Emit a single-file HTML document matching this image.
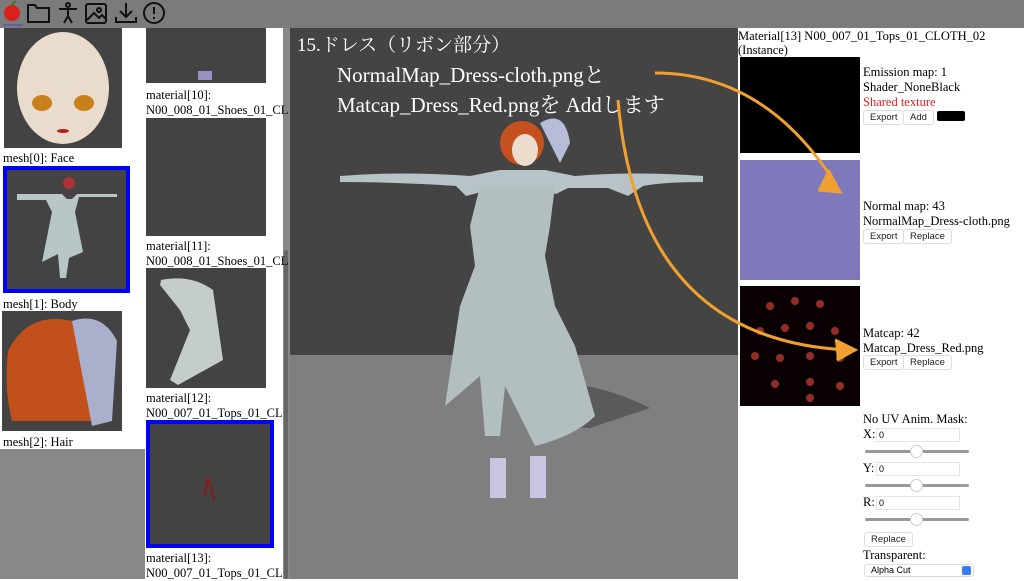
<!DOCTYPE html>
<html><head><meta charset="utf-8"><style>
*{margin:0;padding:0;box-sizing:border-box}
body{width:1024px;height:579px;overflow:hidden;position:relative;background:#fff;font-family:"Liberation Serif",serif;font-size:12.5px;color:#000}
.a{position:absolute}
.t{position:absolute;white-space:nowrap;line-height:15px}
.th{position:absolute;background:#434343}
.bl{border:4px solid #0000ff}
.btn{position:absolute;font-family:"Liberation Sans",sans-serif;font-size:9.5px;border:1px solid #ddd;border-radius:3px;background:#fff;padding:1px 6px;line-height:11px;color:#222}
.inp{position:absolute;width:84px;height:14px;border:1px solid #e4e4e4;font-family:"Liberation Sans",sans-serif;font-size:9px;padding-left:2px;line-height:12px}
.sl{position:absolute;width:104px;height:3px;background:#999;border-radius:2px}
.sl i{position:absolute;left:45px;top:-5px;width:13px;height:13px;border-radius:50%;background:#fff;border:1px solid #ccc}
.ov{position:absolute;white-space:nowrap;color:#fff;font-size:21px;line-height:22px;font-family:'Liberation Serif','Noto Serif CJK SC',serif}
</style></head><body>
<div class="a" style="left:0;top:0;width:1024px;height:28px;background:#7b7b7b"></div>
<svg class="a" style="left:0;top:0" width="170" height="28" fill="none" stroke="#111" stroke-width="2">
<circle cx="12" cy="13" r="8" fill="#d8201c" stroke="none"/><path d="M12 5 q1 -3 4 -3" stroke="#3a7a1a"/>
<line x1="3" y1="25" x2="23" y2="25" stroke="#6a5aa0"/>
<path d="M28 5h7l2 3h12v14h-21z"/>
<circle cx="68" cy="5" r="2"/><path d="M59 9h18M68 9v7l-4 7M68 16l4 7"/>
<rect x="86" y="4" width="20" height="19" rx="2"/><circle cx="99" cy="10" r="2"/><path d="M87 20l7-7 5 5 3-3 4 4"/>
<path d="M126 3v13M120 11l6 6 6-6M116 17v5h20v-5"/>
<circle cx="154" cy="13" r="10"/><path d="M154 7v7M154 17v2"/>
</svg>
<div class="a" style="left:0;top:449px;width:145px;height:130px;background:#888"></div>
<div class="a" style="left:283px;top:28px;width:7px;height:551px;background:#888"></div>
<div class="a" style="left:284px;top:250px;width:4px;height:329px;background:#666;border-radius:2px"></div>
<div class="th" style="left:4px;top:28px;width:118px;height:120px">
<svg width="118" height="120"><ellipse cx="59" cy="60" rx="46" ry="56" fill="#e9dccd"/><ellipse cx="38" cy="75" rx="10" ry="8" fill="#c8801c"/><ellipse cx="80" cy="75" rx="10" ry="8" fill="#c8801c"/><ellipse cx="59" cy="103" rx="6" ry="2" fill="#b52020"/></svg></div>
<div class="t" style="left:3px;top:151px">mesh[0]: Face</div>
<div class="th bl" style="left:3px;top:166px;width:127px;height:127px">
<svg width="119" height="119"><path d="M10 24h45l5 5h5l5-5h40v3H72l-4 15 8 40-14 6-3 20h-6l-2-24-16 8 10-50-6-12H10z" fill="#b9c6c8"/><circle cx="62" cy="13" r="6" fill="#a33"/></svg></div>
<div class="t" style="left:3px;top:297px">mesh[1]: Body</div>
<div class="th" style="left:2px;top:311px;width:120px;height:120px">
<svg width="120" height="120"><path d="M6 40q20-40 64-30q18 30 20 100H10q-8-30-4-70z" fill="#c2501a"/><path d="M70 10q30-10 45 20l-5 80-20 5z" fill="#aab0cc"/></svg></div>
<div class="t" style="left:3px;top:435px">mesh[2]: Hair</div>
<div class="th" style="left:146px;top:28px;width:120px;height:55px"><div class="a" style="left:52px;top:43px;width:14px;height:9px;background:#9890c0"></div></div>
<div class="t" style="left:146px;top:88px">material[10]:<br>N00_008_01_Shoes_01_CL</div>
<div class="th" style="left:146px;top:118px;width:120px;height:118px"></div>
<div class="t" style="left:146px;top:239px">material[11]:<br>N00_008_01_Shoes_01_CL</div>
<div class="th" style="left:146px;top:268px;width:120px;height:120px">
<svg width="120" height="120"><path d="M15 12q30-6 52 10l10 70-45 25-8-5 20-50-10-20-20-25z" fill="#c4cccc"/></svg></div>
<div class="t" style="left:146px;top:391px">material[12]:<br>N00_007_01_Tops_01_CL</div>
<div class="th bl" style="left:146px;top:420px;width:128px;height:128px"><svg width="120" height="120"><path d="M58 54l-4 18M58 54l6 22" stroke="#8a1a1a" stroke-width="2"/></svg></div>
<div class="t" style="left:146px;top:551px">material[13]:<br>N00_007_01_Tops_01_CL</div>
<div class="a" style="left:290px;top:28px;width:448px;height:551px;background:#444;overflow:hidden">
<div class="a" style="left:0;top:327px;width:448px;height:224px;background:#7f7f7f"></div>
<svg class="a" style="left:0;top:0" width="448" height="551">
<path d="M230 360q60-15 130 20l-60 20q-40 0-70-40z" fill="#5a5a5a"/>
<path d="M50 148q60-5 130 0l30 -6h45l30 6q60-5 128 0v6q-40 0-60 4l-15 10-20-8-10 0-30 0-12 6-20-6-40 0-30 8-10-10q-60-4-116-4z" fill="#b7c3c6"/>
<path d="M190 158h75l-5 40 -5 30 10 50 20 40 20 70q-20 20-60 30l-30-60-5 50h-15l-5-60-35 30 15-100 15-40-5-40z" fill="#b2bec0"/>
<circle cx="232" cy="115" r="22" fill="#c5521e"/><ellipse cx="235" cy="122" rx="13" ry="16" fill="#ecdccc"/>
<path d="M250 95q25-15 30 20l-10 20z" fill="#b8bcd8"/>
<path d="M200 430h16v40h-16zM240 428h16v42h-16z" fill="#c9c5e0"/>
</svg>
</div>
<div class="ov" style="left:297px;top:35px;font-size:19px">15.ドレス（リボン部分）</div>
<div class="ov" style="left:337px;top:64px">NormalMap_Dress-cloth.pngと</div>
<div class="ov" style="left:337px;top:94px">Matcap_Dress_Red.pngを Addします</div>
<div class="t" style="left:738px;top:29px;line-height:14px">Material[13] N00_007_01_Tops_01_CLOTH_02<br>(Instance)</div>
<div class="a" style="left:740px;top:57px;width:120px;height:96px;background:#000"></div>
<div class="a" style="left:740px;top:160px;width:120px;height:120px;background:#7f78bb"></div>
<div class="a" style="left:740px;top:286px;width:120px;height:120px;background:#0a0202;overflow:hidden">
<svg width="120" height="120"><g fill="#b53a30" opacity=".8"><circle cx="30" cy="20" r="4"/><circle cx="55" cy="15" r="4"/><circle cx="80" cy="18" r="4"/><circle cx="20" cy="45" r="4"/><circle cx="45" cy="42" r="4"/><circle cx="70" cy="40" r="4"/><circle cx="95" cy="45" r="4"/><circle cx="15" cy="70" r="4"/><circle cx="40" cy="72" r="4"/><circle cx="70" cy="70" r="4"/><circle cx="100" cy="72" r="4"/><circle cx="35" cy="98" r="4"/><circle cx="70" cy="96" r="4"/><circle cx="100" cy="100" r="4"/><circle cx="70" cy="112" r="4"/></g></svg></div>
<div class="t" style="left:863px;top:65px">Emission map: 1<br>Shader_NoneBlack<br><span style="color:#e02020">Shared texture</span></div>
<div class="btn" style="left:863px;top:110px">Export</div><div class="btn" style="left:903px;top:110px">Add</div>
<div class="a" style="left:937px;top:111px;width:28px;height:10px;background:#000;border-radius:2px"></div>
<div class="t" style="left:863px;top:199px">Normal map: 43<br>NormalMap_Dress-cloth.png</div>
<div class="btn" style="left:863px;top:229px">Export</div><div class="btn" style="left:903px;top:229px">Replace</div>
<div class="t" style="left:863px;top:326px">Matcap: 42<br>Matcap_Dress_Red.png</div>
<div class="btn" style="left:863px;top:355px">Export</div><div class="btn" style="left:903px;top:355px">Replace</div>
<div class="t" style="left:863px;top:412px">No UV Anim. Mask:</div>
<div class="t" style="left:863px;top:427px">X:</div><div class="inp" style="left:876px;top:428px">0</div><div class="sl" style="left:865px;top:450px"><i></i></div>
<div class="t" style="left:863px;top:461px">Y:</div><div class="inp" style="left:876px;top:462px">0</div><div class="sl" style="left:865px;top:484px"><i></i></div>
<div class="t" style="left:863px;top:495px">R:</div><div class="inp" style="left:876px;top:496px">0</div><div class="sl" style="left:865px;top:518px"><i></i></div>
<div class="btn" style="left:864px;top:532px">Replace</div>
<div class="t" style="left:863px;top:548px">Transparent:</div>
<div class="a" style="left:864px;top:564px;width:110px;height:13px;border:1px solid #ddd;border-radius:3px;font-family:'Liberation Sans',sans-serif;font-size:9px;padding-left:6px;line-height:11px">Alpha Cut<span class="a" style="right:2px;top:1px;width:9px;height:9px;background:#3b7bf0;border-radius:2px"></span></div>
<svg class="a" style="left:0;top:0;pointer-events:none" width="1024" height="579" fill="none" stroke="#f0a030" stroke-width="3">
<path d="M655 73q110 0 180 110"/><path d="M828 170l12 22 -22 -2" fill="#f0a030"/>
<path d="M618 100q20 240 230 250"/><path d="M835 340l20 10 -18 10" fill="#f0a030"/>
</svg>
</body></html>
